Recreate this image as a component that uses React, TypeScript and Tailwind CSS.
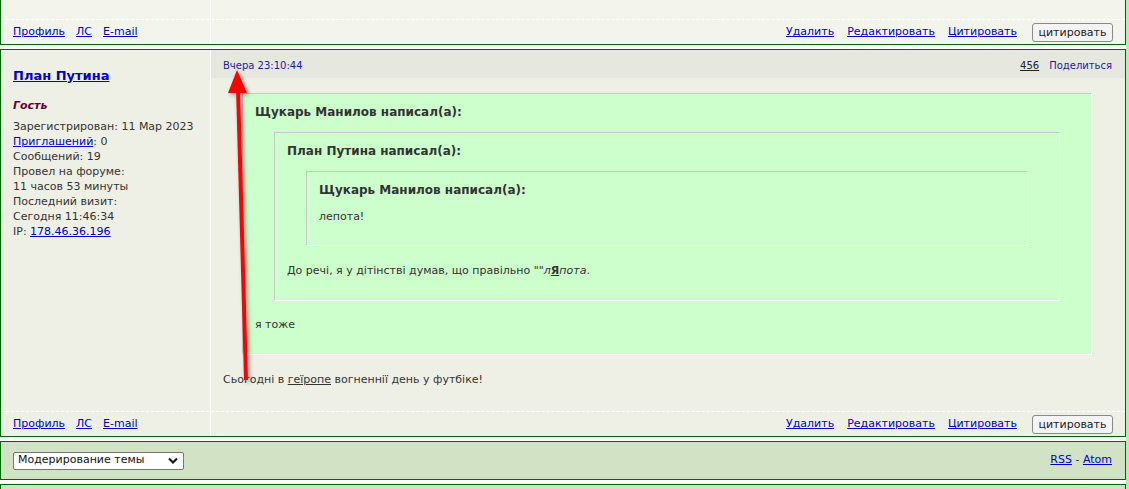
import React from 'react'

const font = { fontFamily: '"DejaVu Sans", Verdana, sans-serif' }

function PostFooter() {
    return (
        <div className="grid grid-cols-[210px_1fr] border-t border-dashed border-white h-[25px]">
            <div className="border-r border-white flex items-center gap-[11px] pl-[12px] pt-[1px] text-[11px]">
                <a href="#" className="text-[#0000cc] underline">Профиль</a>
                <a href="#" className="text-[#0000cc] underline">ЛС</a>
                <a href="#" className="text-[#0000cc] underline">E-mail</a>
            </div>
            <div className="flex items-center justify-end gap-[13px] pr-[12px] pt-[1px] text-[11px]">
                <a href="#" className="text-[#0000cc] underline">Удалить</a>
                <a href="#" className="text-[#0000cc] underline">Редактировать</a>
                <a href="#" className="text-[#0000cc] underline">Цитировать</a>
                <button className="ml-[2px] h-[19px] w-[81px] border border-[#8a8a8a] rounded-[3px] bg-[#f4f4f4] text-[11px] text-[#222] leading-none">
                    цитировать
                </button>
            </div>
        </div>
    )
}

function Quote({ author, children, last }: { author: string; children: React.ReactNode; last?: boolean }) {
    return (
        <div className="border border-t-[#c8c8c8] border-l-[#c8c8c8] border-b-white border-r-white bg-[#ccffcc] px-[12px] pt-[9px]">
            <div className="text-[12px] font-bold leading-[18px] text-[#333]">{author}</div>
            <div className={last ? 'pt-[10px]' : 'pt-[11px]'}>{children}</div>
        </div>
    )
}

const info = [
    'Зарегистрирован: 11 Мар 2023',
    null,
    'Сообщений: 19',
    'Провел на форуме:',
    '11 часов 53 минуты',
    'Последний визит:',
    'Сегодня 11:46:34',
]

export default function App() {
    return (
        <div className="relative w-[1129px] h-[489px] overflow-hidden bg-white flex text-[#333]" style={font}>
            <div className="w-[1126px] flex flex-col gap-[4px]">
                {/* previous post, cut off at the top */}
                <div className="border-x border-b border-[#006600] bg-[#f3f5ec]">
                    <div className="grid grid-cols-[210px_1fr] h-[19px]">
                        <div className="border-r border-white" />
                        <div />
                    </div>
                    <PostFooter />
                </div>

                {/* post */}
                <div className="border border-[#006600] bg-[#eef0e6]">
                    <div className="grid grid-cols-[210px_1fr]">
                        <div className="border-r border-white pl-[12px] pt-[17px]">
                            <a href="#" className="block text-[13px] font-bold leading-[18px] text-[#0000cc] underline">План Путина</a>
                            <div className="mt-[13px] text-[11px] font-bold italic leading-[15px] text-[#660033]">Гость</div>
                            <div className="mt-[6px] text-[11px] leading-[15px] text-[#333]">
                                {info.map((l, i) =>
                                    l === null ? (
                                        <div key={i}>
                                            <a href="#" className="text-[#0000cc] underline">Приглашений</a>: 0
                                        </div>
                                    ) : (
                                        <div key={i}>{l}</div>
                                    )
                                )}
                                <div>
                                    IP: <a href="#" className="text-[#0000cc] underline">178.46.36.196</a>
                                </div>
                            </div>
                        </div>
                        <div>
                            <div className="h-[28px] bg-[#e6e8df] flex items-center justify-between pl-[12px] pr-[13px] pt-[3px] text-[10px]">
                                <span className="text-[#1a1aaa]">Вчера 23:10:44</span>
                                <div className="flex items-center gap-[10px]">
                                    <a href="#" className="text-[#222] underline">456</a>
                                    <span className="text-[#1a1aaa]">Поделиться</span>
                                </div>
                            </div>
                            <div className="pl-[12px] pr-[12px] pt-[15px] pb-[24px] text-[11px] leading-[15px]">
                                <div className="ml-[19px] mr-[21px]">
                                    <Quote author="Щукарь Манилов написал(а):">
                                        <div className="mx-[19px]">
                                            <Quote author="План Путина написал(а):">
                                                <div className="mx-[19px]">
                                                    <Quote author="Щукарь Манилов написал(а):" last>
                                                        <div className="pb-[21px]">лепота!</div>
                                                    </Quote>
                                                </div>
                                                <div className="pt-[17px] pb-[22px]">
                                                    До речі, я у дітінстві думав, що правільно ""
                                                    <i>л</i>
                                                    <b className="underline">Я</b>
                                                    <i>пота</i>.
                                                </div>
                                            </Quote>
                                        </div>
                                        <div className="pt-[16px] pb-[22px]">я тоже</div>
                                    </Quote>
                                </div>
                                <div className="pt-[17px]">
                                    Сьогодні в <span className="underline">геїропе</span> вогненнії день у футбіке!
                                </div>
                            </div>
                        </div>
                    </div>
                    <PostFooter />
                </div>

                {/* moderation bar */}
                <div className="h-[39px] border border-[#006600] bg-[#d1e2c5] flex items-center justify-between pl-[12px] pr-[13px]">
                    <div className="relative w-[171px] h-[18px] border border-[#767676] rounded-[2px] bg-white flex items-center pl-[4px] text-[11px] text-[#111]">
                        Модерирование темы
                        <svg className="absolute right-[5px] top-[4px]" width="10" height="8" viewBox="0 0 10 8">
                            <path d="M1 1.5 L5 5.5 L9 1.5" fill="none" stroke="#111" strokeWidth="2" />
                        </svg>
                    </div>
                    <div className="text-[11px] text-[#333]">
                        <a href="#" className="text-[#0000cc] underline">RSS</a> - <a href="#" className="text-[#0000cc] underline">Atom</a>
                    </div>
                </div>

                {/* next block */}
                <div className="flex-1 border-x border-t border-[#006600] bg-[#d1e2c5]" />
            </div>
            <div className="w-[3px] bg-[#b4f0b4]" />

            {/* red arrow annotation */}
            <svg className="absolute left-0 top-0 pointer-events-none" width="1129" height="489">
                <defs>
                    <filter id="sh" x="-50%" y="-50%" width="200%" height="200%">
                        <feDropShadow dx="2" dy="2" stdDeviation="2" floodColor="#000" floodOpacity="0.35" />
                    </filter>
                </defs>
                <g filter="url(#sh)">
                    <line x1="246" y1="380" x2="238" y2="88" stroke="#ff0000" strokeWidth="4" />
                    <polygon points="237,70 228,93 247,93" fill="#ff0000" />
                </g>
            </svg>
        </div>
    )
}
